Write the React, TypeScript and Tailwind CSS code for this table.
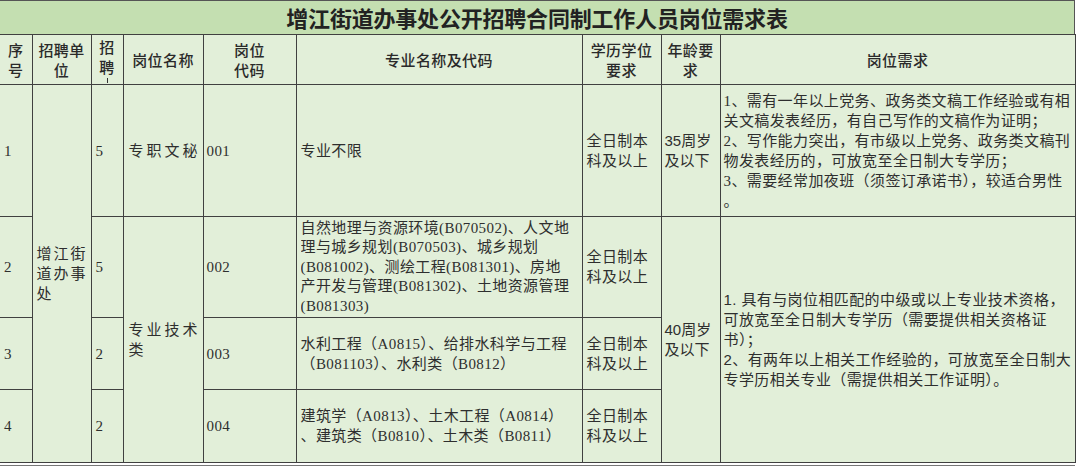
import React from "react";

const serif = "font-['Liberation_Serif','Noto_Sans_CJK_SC',serif]";
const sans = "font-['Liberation_Sans','Noto_Sans_CJK_SC',sans-serif]";

const cell = "border border-[#404040] align-middle p-0 text-left";
const head = "border border-[#404040] align-middle p-0 text-center font-medium text-[#2a2a2a]";

function Lines({ lines }: { lines: string[] }) {
  return (
    <>
      {lines.map((l, i) => (
        <div key={i} className="whitespace-nowrap">
          {l}
        </div>
      ))}
    </>
  );
}

export default function App() {
  return (
    <div className="w-[1080px] h-[466px] bg-white overflow-hidden text-[#2e2e2e]">
      <div className="w-[1075px]">
        <div className="h-[34px] border-t border-r border-[#555] bg-[#c4dfb1] flex items-center justify-center font-['Noto_Sans_CJK_SC',sans-serif] text-[22px] font-bold text-[#222] tracking-[-0.2px]">
          增江街道办事处公开招聘合同制工作人员岗位需求表
        </div>
        <table className="table-fixed border-collapse w-[1075px] bg-[#e2efd9] text-[15px] leading-[20px] tracking-[0.4px]">
          <colgroup>
            <col className="w-[32px]" />
            <col className="w-[59px]" />
            <col className="w-[32px]" />
            <col className="w-[80px]" />
            <col className="w-[93px]" />
            <col className="w-[286px]" />
            <col className="w-[79px]" />
            <col className="w-[59px]" />
            <col className="w-[355px]" />
          </colgroup>
          <tbody>
            <tr className="h-[50px] font-['Noto_Sans_CJK_SC',sans-serif]">
              <th className={`${head} border-l-0`}>
                序<br />号
              </th>
              <th className={head}>
                招聘单<br />位
              </th>
              <th className={`${head} align-top`}>
                <div className="h-[48px] pt-[2px] flex flex-col items-center">
                  <span>招</span>
                  <span>聘</span>
                  <span className="w-px h-[5px] bg-[#333] mt-[1px]" />
                </div>
              </th>
              <th className={head}>岗位名称</th>
              <th className={head}>
                岗位<br />代码
              </th>
              <th className={head}>专业名称及代码</th>
              <th className={head}>
                学历学位<br />要求
              </th>
              <th className={head}>
                年龄要<br />求
              </th>
              <th className={head}>岗位需求</th>
            </tr>

            <tr className="h-[132px]">
              <td className={`${cell} border-l-0 pl-[4px] ${serif}`}>1</td>
              <td rowSpan={4} className={`${cell} pl-[4px] ${serif} tracking-[2px]`}>
                增江街<br />道办事<br />处
              </td>
              <td className={`${cell} pl-[4px] ${serif}`}>5</td>
              <td className={`${cell} pl-[5px] ${serif} tracking-[3px]`}>专职文秘</td>
              <td className={`${cell} pl-[3px] ${serif}`}>001</td>
              <td className={`${cell} pl-[4px] ${sans}`}>专业不限</td>
              <td className={`${cell} pl-[4px] ${sans}`}>
                全日制本<br />科及以上
              </td>
              <td className={`${cell} pl-[3px] ${sans} tracking-normal`}>
                35周岁<br />及以下
              </td>
              <td className={`${cell} pl-[3px] ${serif}`}>
                <Lines
                  lines={[
                    "1、需有一年以上党务、政务类文稿工作经验或有相",
                    "关文稿发表经历，有自己写作的文稿作为证明；",
                    "2、写作能力突出，有市级以上党务、政务类文稿刊",
                    "物发表经历的，可放宽至全日制大专学历；",
                    "3、需要经常加夜班（须签订承诺书），较适合男性",
                    "。",
                  ]}
                />
              </td>
            </tr>

            <tr className="h-[101px]">
              <td className={`${cell} border-l-0 pl-[4px] ${serif}`}>2</td>
              <td className={`${cell} pl-[4px] ${serif}`}>5</td>
              <td rowSpan={3} className={`${cell} pl-[5px] ${serif} tracking-[3px]`}>
                专业技术<br />类
              </td>
              <td className={`${cell} pl-[3px] ${serif}`}>002</td>
              <td className={`${cell} pl-[4px] ${serif}`}>
                <div className="h-[99px] overflow-hidden pt-[1px] leading-[19.5px]">
                  <Lines
                    lines={[
                      "自然地理与资源环境(B070502)、人文地",
                      "理与城乡规划(B070503)、城乡规划",
                      "(B081002)、测绘工程(B081301)、房地",
                      "产开发与管理(B081302)、土地资源管理",
                      "(B081303)",
                    ]}
                  />
                </div>
              </td>
              <td className={`${cell} pl-[4px] ${sans}`}>
                全日制本<br />科及以上
              </td>
              <td rowSpan={3} className={`${cell} pl-[3px] ${sans} tracking-normal`}>
                40周岁<br />及以下
              </td>
              <td rowSpan={3} className={`${cell} pl-[3px] ${sans}`}>
                <Lines
                  lines={[
                    "1. 具有与岗位相匹配的中级或以上专业技术资格，",
                    "可放宽至全日制大专学历（需要提供相关资格证",
                    "书）；",
                    "2、有两年以上相关工作经验的，可放宽至全日制大",
                    "专学历相关专业（需提供相关工作证明）。",
                  ]}
                />
              </td>
            </tr>

            <tr className="h-[72px]">
              <td className={`${cell} border-l-0 pl-[4px] ${serif}`}>3</td>
              <td className={`${cell} pl-[4px] ${serif}`}>2</td>
              <td className={`${cell} pl-[3px] ${serif}`}>003</td>
              <td className={`${cell} pl-[4px] ${serif}`}>
                <Lines lines={["水利工程（A0815）、给排水科学与工程", "（B081103）、水利类（B0812）"]} />
              </td>
              <td className={`${cell} pl-[4px] ${sans}`}>
                全日制本<br />科及以上
              </td>
            </tr>

            <tr className="h-[73px]">
              <td className={`${cell} border-l-0 pl-[4px] ${serif}`}>4</td>
              <td className={`${cell} pl-[4px] ${serif}`}>2</td>
              <td className={`${cell} pl-[3px] ${serif}`}>004</td>
              <td className={`${cell} pl-[4px] ${serif}`}>
                <Lines lines={["建筑学（A0813）、土木工程（A0814）", "、建筑类（B0810）、土木类（B0811）"]} />
              </td>
              <td className={`${cell} pl-[4px] ${sans}`}>
                全日制本<br />科及以上
              </td>
            </tr>
          </tbody>
        </table>
        <div className="h-[2px] bg-white" />
        <div className="h-px bg-[#777]" />
      </div>
    </div>
  );
}
